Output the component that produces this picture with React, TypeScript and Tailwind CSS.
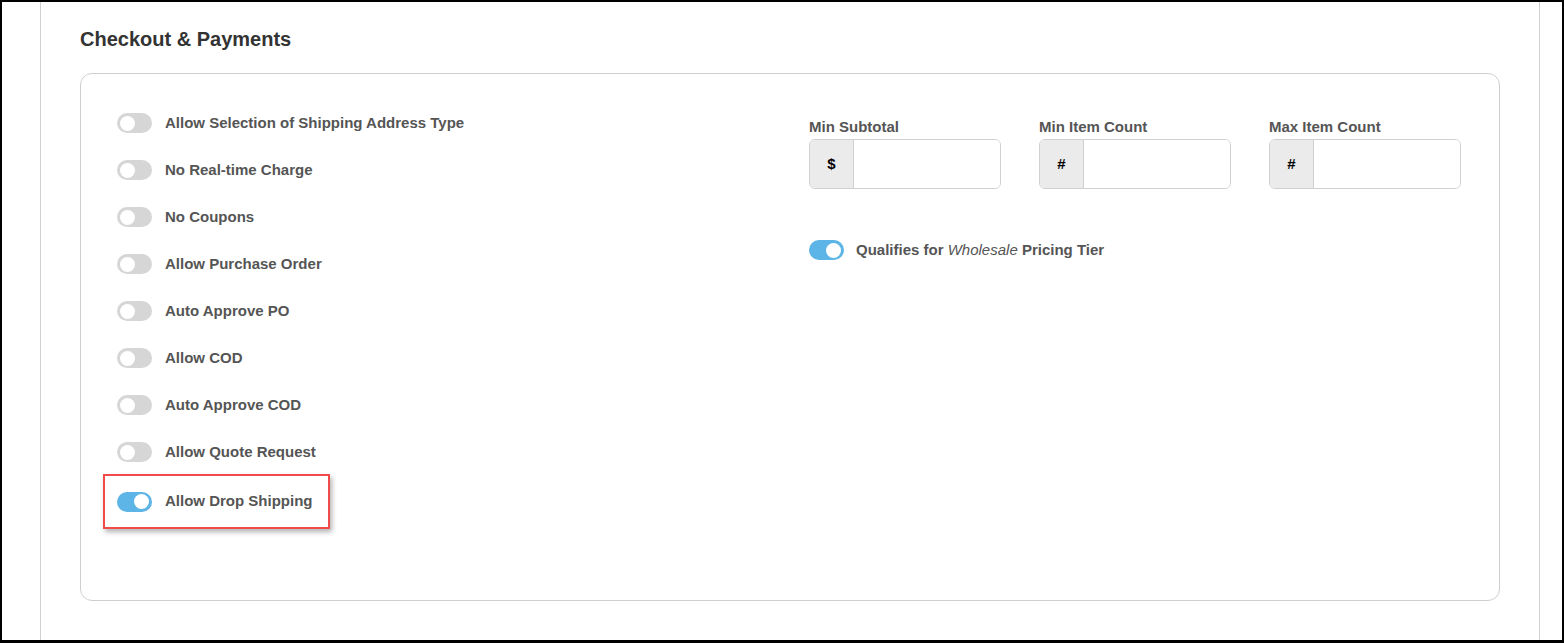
const leftToggles: { label: string; on?: boolean; boxed?: boolean }[] = [
  { label: 'Allow Selection of Shipping Address Type' },
  { label: 'No Real-time Charge' },
  { label: 'No Coupons' },
  { label: 'Allow Purchase Order' },
  { label: 'Auto Approve PO' },
  { label: 'Allow COD' },
  { label: 'Auto Approve COD' },
  { label: 'Allow Quote Request' },
  { label: 'Allow Drop Shipping', on: true, boxed: true },
]

const limits = [
  { label: 'Min Subtotal', sign: '$' },
  { label: 'Min Item Count', sign: '#' },
  { label: 'Max Item Count', sign: '#' },
]

function Toggle({ on }: { on?: boolean }) {
  return (
    <span
      className={`flex h-[20px] w-[35px] shrink-0 items-center rounded-full px-[3px] ${
        on ? 'justify-end bg-[#5db4e6]' : 'justify-start bg-[#d6d6d6]'
      }`}
    >
      <span className="h-[15px] w-[15px] rounded-full bg-white" />
    </span>
  )
}

export default function App() {
  return (
    <div className="h-[643px] w-[1564px] border-t-2 border-r-2 border-b-[3px] border-l-2 border-black bg-white font-['Liberation_Sans',Arial,sans-serif]">
      <div className="ml-[38px] h-full w-[1500px] border-x border-[#d0d0d0] px-[39px] pt-[25px]">
        <h2 className="text-[20px] leading-[24px] font-bold text-[#333]">Checkout &amp; Payments</h2>

        <div className="mt-[22px] flex h-[528px] rounded-[12px] border border-[#cfcfcf] pt-[39px] pl-[36px]">
          <div className="flex w-[692px] flex-col gap-[27px]">
            {leftToggles.map((t) =>
              t.boxed ? (
                <div
                  key={t.label}
                  className="-mt-[15px] -ml-[14px] flex h-[55px] w-[227px] items-center gap-[13px] border-2 border-[#f04a4a] pl-[12px] shadow-[2px_3px_5px_rgba(0,0,0,0.3)]"
                >
                  <Toggle on={t.on} />
                  <span className="text-[15px] font-bold text-[#555]">{t.label}</span>
                </div>
              ) : (
                <div key={t.label} className="flex h-[20px] items-center gap-[13px]">
                  <Toggle on={t.on} />
                  <span className="text-[15px] font-bold text-[#555]">{t.label}</span>
                </div>
              ),
            )}
          </div>

          <div className="flex flex-col pt-[4px]">
            <div className="flex gap-[38px]">
              {limits.map((l) => (
                <div key={l.label} className="flex w-[192px] flex-col">
                  <label className="text-[15px] leading-[20px] font-bold text-[#555]">{l.label}</label>
                  <div className="mt-[2px] flex h-[50px] overflow-hidden rounded-[6px] border border-[#d0d0d0]">
                    <span className="flex w-[44px] shrink-0 items-center justify-center border-r border-[#d0d0d0] bg-[#ebebeb] text-[15px] font-bold text-black">
                      {l.sign}
                    </span>
                    <input className="min-w-0 flex-1 bg-white outline-none" />
                  </div>
                </div>
              ))}
            </div>

            <div className="mt-[50px] flex items-center gap-[12px]">
              <Toggle on />
              <span className="text-[15px] font-bold text-[#555]">
                Qualifies for <i className="font-normal italic">Wholesale</i> Pricing Tier
              </span>
            </div>
          </div>
        </div>
      </div>
    </div>
  )
}
